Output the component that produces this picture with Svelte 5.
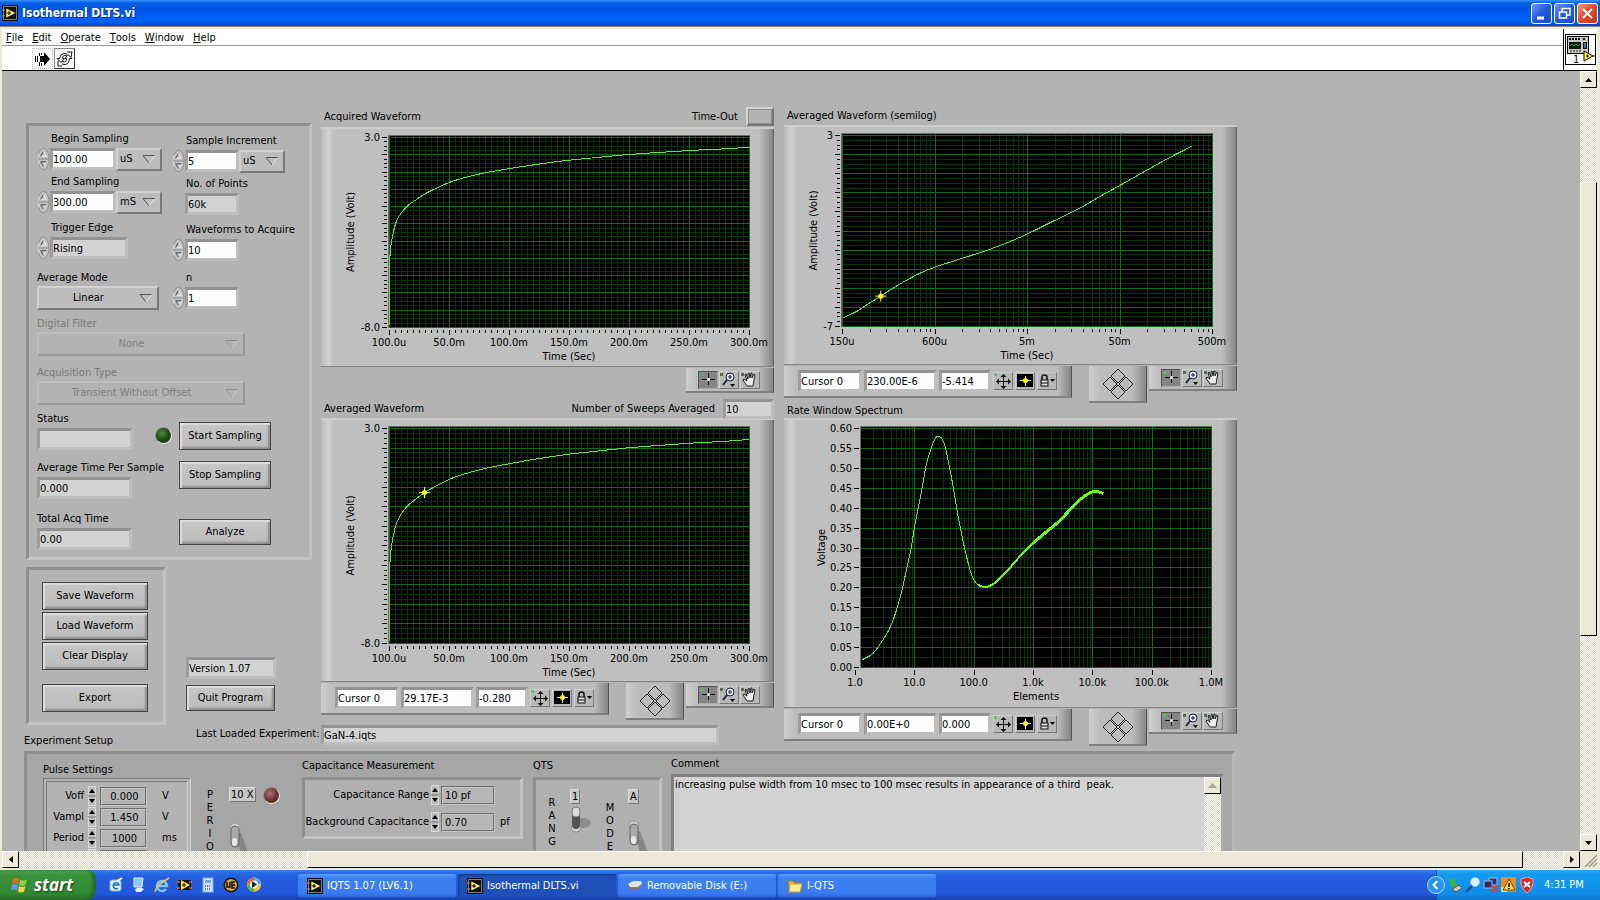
<script lang="ts">
  const menus = ["File", "Edit", "Operate", "Tools", "Window", "Help"];

  const transient = [
    [0, -7.86], [0.1, -4.08], [1.1, -3.31], [2.5, -2.69], [4.7, -2.06], [7.5, -1.61],
    [10.9, -1.27], [15, -0.96], [22, -0.61], [29.2, -0.28], [37.4, 0.01], [49.9, 0.4],
    [63.9, 0.7], [80.6, 0.97], [100, 1.2], [122.4, 1.44], [147.5, 1.67], [172.6, 1.84],
    [200.5, 2.02], [228.3, 2.15], [256, 2.27], [278.5, 2.34], [300, 2.44],
  ].map(([ms, v]) => [ms / 50, v]);

  const semilog = [
    [0, -6.56], [0.165, -6.18], [0.266, -5.85], [0.414, -5.41], [0.518, -5.08], [0.698, -4.56],
    [0.86, -4.16], [1.007, -3.88], [1.302, -3.42], [1.597, -2.95], [1.813, -2.55], [2, -2.15],
    [2.302, -1.43], [2.568, -0.8], [2.784, -0.19], [3.004, 0.4], [3.288, 1.18], [3.504, 1.76],
    [3.777, 2.44],
  ];

  const spectrum = [
    [0.118, 0.02], [0.292, 0.035], [0.483, 0.074], [0.617, 0.112], [0.763, 0.182], [0.853, 0.241],
    [0.943, 0.304], [1, 0.358], [1.1, 0.433], [1.2, 0.513], [1.302, 0.562], [1.347, 0.576],
    [1.403, 0.581], [1.448, 0.577], [1.51, 0.555], [1.582, 0.505], [1.655, 0.446], [1.734, 0.375],
    [1.846, 0.295], [1.93, 0.245], [2.003, 0.218], [2.07, 0.207], [2.166, 0.202], [2.267, 0.205],
    [2.379, 0.216], [2.548, 0.241], [2.772, 0.279], [2.997, 0.313], [3.221, 0.341], [3.446, 0.369],
    [3.614, 0.396], [3.782, 0.421], [3.923, 0.436], [4.018, 0.442], [4.091, 0.441], [4.175, 0.437],
  ];

  // x values are counted in major divisions, y values in axis units
  const timeAxis = ["100.0u", "50.0m", "100.0m", "150.0m", "200.0m", "250.0m", "300.0m"];
  const acquired = {
    name: "Acquired Waveform", h: 240, left: 68, right: 428, top: 10, bottom: 200, axis: 68,
    max: 3, min: -8, rows: 11, sub: 4, log: false, labels: timeAxis, ends: ["3.0", "-8.0"],
    xTitle: "Time (Sec)", yTitle: "Amplitude (Volt)", yTitleX: 30,
    lines: [{ points: transient, width: 1 }], cursor: null, fine: true,
  };
  const averaged = {
    ...acquired, name: "Averaged Waveform", h: 264, bottom: 225, cursor: [0.583, -0.28],
  };
  const averagedLog = {
    ...acquired, name: "Averaged Waveform (semilog)", left: 58, right: 428, bottom: 201, axis: 58,
    min: -7, rows: 10, log: true, labels: ["150u", "600u", "5m", "50m", "500m"], ends: ["3", "-7"],
    lines: [{ points: semilog, width: 1 }], cursor: [0.414, -5.41],
  };
  const rate = {
    ...acquired, name: "Rate Window Spectrum", h: 290, left: 77, right: 427, bottom: 249, axis: 71,
    max: 0.6, min: 0, rows: 12, sub: 2, log: true, fine: false,
    labels: ["1.0", "10.0", "100.0", "1.0k", "10.0k", "100.0k", "1.0M"],
    ends: Array.from({ length: 13 }, (_, i) => ((12 - i) / 20).toFixed(2)),
    xTitle: "Elements", yTitle: "Voltage", yTitleX: 38,
    lines: [
      { points: spectrum.slice(0, 22), width: 1 },
      { points: spectrum.slice(21, 28), width: 2 },
      { points: spectrum.slice(27), width: 3 },
    ],
    cursor: null,
  };

  let comment = $state(
    "increasing pulse width from 10 msec to 100 msec results in appearance of a third  peak."
  );

  type Graph = any;

  const sx = (g: Graph, d: number) => g.axis + (d * (g.right - g.axis)) / (g.labels.length - 1);
  const sy = (g: Graph, v: number) => g.top + ((g.max - v) / (g.max - g.min)) * (g.bottom - g.top);

  function xLines(g: Graph) {
    const out = [];
    for (let i = 0; i < g.labels.length; i++) {
      out.push({ x: Math.round(sx(g, i)) + 0.5, major: true });
      if (i === g.labels.length - 1) break;
      const steps = g.log ? [2, 3, 4, 5, 6, 7, 8, 9] : [1, 2, 3, 4, 5, 6, 7, 8, 9];
      for (const k of steps) {
        const d = g.log ? Math.log10(k) : k / 10;
        out.push({ x: Math.round(sx(g, i + d)) + 0.5, major: false });
      }
    }
    return out;
  }

  function yLines(g: Graph) {
    const n = g.rows * g.sub;
    return Array.from({ length: n + 1 }, (_, i) => ({
      y: Math.round(g.top + (i * (g.bottom - g.top)) / n) + 0.5,
      major: i % g.sub === 0,
    }));
  }

  // smooth curve through the samples, handles kept inside each x interval
  function path(g: Graph, pts: number[][]) {
    const p = pts.map(([d, v]) => [sx(g, d) + 0.5, sy(g, v) + 0.5]);
    const slope = p.map((_, i) => {
      const a = p[Math.max(i - 1, 0)];
      const b = p[Math.min(i + 1, p.length - 1)];
      return (b[1] - a[1]) / (b[0] - a[0]);
    });
    let d = `M${p[0][0]} ${p[0][1]}`;
    for (let i = 1; i < p.length; i++) {
      const [x0, y0] = p[i - 1];
      const [x1, y1] = p[i];
      const dx = (x1 - x0) / 3;
      d += dx < 1
        ? `L${x1} ${y1}`
        : `C${x0 + dx} ${y0 + slope[i - 1] * dx} ${x1 - dx} ${y1 - slope[i] * dx} ${x1} ${y1}`;
    }
    return d;
  }

  const pulse = [
    ["Voff", "0.000", "V"],
    ["Vampl", "1.450", "V"],
    ["Period", "1000", "ms"],
    ["Width", "", ""],
  ];

  const tasks = [
    { title: "IQTS 1.07 (LV6.1)", icon: "vi" },
    { title: "Isothermal DLTS.vi", icon: "vi", active: true },
    { title: "Removable Disk (E:)", icon: "disk" },
    { title: "I-QTS", icon: "folder" },
  ];
</script>

{#snippet viIcon()}
  <svg class="icon" width="16" height="16" viewBox="0 0 16 16">
    <rect width="16" height="16" fill="#111" />
    <rect x="1.5" y="1.5" width="13" height="13" fill="none" stroke="#e8e8d0" stroke-dasharray="1 1" />
    <path d="M4 3v10l10-5z" fill="#fff27a" stroke="#000" stroke-width="0.6" />
    <path d="M5 8h4M7 6v4" stroke="#000" />
    <path d="M0 5h3M0 11h3" stroke="#d8a030" />
  </svg>
{/snippet}

{#snippet spinner()}
  <svg class="spin" width="13" height="24" viewBox="0 0 14 24">
    <ellipse cx="7" cy="12" rx="6" ry="11.5" fill="#c2c2c2" stroke="#8a8a8a" />
    <path d="M2 6a5 10 0 0 0 0 12" fill="none" stroke="#e6e6e6" />
    <path d="M1 12h12" stroke="#888" />
    <path d="M4 9l3-5" stroke="#333" fill="none" />
    <path d="M7 4l3 5H5" stroke="#f4f4f4" fill="none" />
    <path d="M10 15l-3 5" stroke="#f4f4f4" fill="none" />
    <path d="M10 15H4l3 5" stroke="#444" fill="none" />
  </svg>
{/snippet}

{#snippet arrows()}
  <svg class="arrows" width="8" height="20" viewBox="0 0 8 20">
    <rect x="0.5" y="0.5" width="7" height="19" fill="#bcbcbc" stroke="#d8d8d8" />
    <path d="M0 10h8" stroke="#777" />
    <path d="M1 7h6L4 3zM1 13h6L4 17z" fill="#000" />
  </svg>
{/snippet}

{#snippet ring(id, options, cls, disabled = false)}
  <span class="ring {cls}">
    <select {id} {disabled} aria-label={id}>
      {#each options as o}<option>{o}</option>{/each}
    </select>
    <svg width="14" height="10" viewBox="0 0 14 10">
      <path d="M1 1.5h12" stroke={disabled ? "#8c8c8c" : "#555"} />
      <path d="M1 1.5L7 9" stroke={disabled ? "#999" : "#555"} fill="none" />
      <path d="M13 1.5L7 9" stroke={disabled ? "#ccc" : "#e8e8e8"} fill="none" />
    </svg>
  </span>
{/snippet}

{#snippet graph(g)}
  <svg class="plot" width="453" height={g.h} viewBox="0 0 453 {g.h}" role="img" aria-label={g.name}>
    <rect x={g.left} y={g.top - 1} width={g.right - g.left + 1} height={g.bottom - g.top + 2} fill="#000" />
    {#each [false, true] as major}
      {#each yLines(g).filter((l) => l.major === major) as l}
        <path d="M{g.left} {l.y}H{g.right + 1}" stroke={major ? "#0f6a1c" : "#08330c"} />
      {/each}
      {#each xLines(g).filter((l) => l.major === major && l.x > g.left) as l}
        <path d="M{l.x} {g.top - 1}V{g.bottom + 1}" stroke={major ? "#0f6a1c" : "#08330c"} />
      {/each}
    {/each}
    <path d="M{g.left - 0.5} {g.bottom + 1}V{g.top - 1.5}H{g.right + 1}" fill="none" stroke="#6d6d6d" />
    {#each yLines(g).filter((l) => g.fine || l.major) as l}
      <path d="M{g.left - (l.major ? 7 : 5)} {l.y}H{g.left - 2}" stroke="#000" />
    {/each}
    {#each xLines(g).filter((l) => g.fine || l.major) as l}
      <path d="M{l.x} {g.bottom + 3}V{g.bottom + (l.major ? 8 : 6)}" stroke="#000" />
    {/each}
    {#each g.ends as e, i}
      <text x={g.left - 9} y={g.top + 4 + (i * (g.bottom - g.top)) / (g.ends.length - 1)} text-anchor="end">{e}</text>
    {/each}
    {#each g.labels as l, i}
      <text x={sx(g, i)} y={g.bottom + 19} text-anchor="middle">{l}</text>
    {/each}
    <text x={(g.left + g.right) / 2} y={g.bottom + 33} text-anchor="middle">{g.xTitle}</text>
    <text transform="translate({g.yTitleX + 3} {(g.top + g.bottom) / 2}) rotate(-90)" text-anchor="middle">{g.yTitle}</text>
    {#each g.lines as l}
      <path
        d={path(g, l.points)}
        fill="none"
        stroke={l.width > 1 ? "#6cf71c" : "#68e038"}
        stroke-width={l.width}
        stroke-linejoin="round"
        shape-rendering="crispEdges"
      />
    {/each}
    {#if g.cursor}
      <g transform="translate({sx(g, g.cursor[0])} {sy(g, g.cursor[1])})">
        <path d="M-5 0.500H6M0.500-5V6" stroke="#ffff30" />
        <circle cx="0.500" cy="0.500" r="2.500" fill="#ffff30" />
      </g>
    {/if}
  </svg>
{/snippet}

{#snippet cursorLegend(id, values)}
  <div class="bar legend">
    {#each values as v, i}
      <input class="sunk white c{i}" aria-label="{id} cursor field {i + 1}" value={v} />
    {/each}
    <button class="tool" aria-label="Move cursor">
      <svg width="20" height="18" viewBox="0 0 20 18">
        <rect x="1" y="1" width="3" height="3" fill="#5ec45e" />
        <path d="M10.500 3v12M4 9.500h12" stroke="#000" />
        <path d="M10.500 2l3 3h-6zM10.500 17l3-3h-6zM3 9.500l3-3v6zM18 9.500l-3-3v6z" fill="#111" />
      </svg>
    </button>
    <button class="tool" aria-label="Cursor style">
      <svg width="20" height="18" viewBox="0 0 20 18">
        <rect x="2" y="2" width="16" height="13" fill="#000" />
        <path d="M5 8.500h11M10.500 4v10" stroke="#ff3" />
        <circle cx="10.500" cy="8.500" r="2.500" fill="#ff3" />
      </svg>
    </button>
    <button class="tool" aria-label="Lock cursor">
      <svg width="20" height="18" viewBox="0 0 20 18">
        <path d="M5 8V5q0-2 2.500-2T10 5v3" fill="none" stroke="#111" stroke-width="1.500" />
        <rect x="4" y="8" width="7" height="6" fill="#ddd" stroke="#111" />
        <path d="M4 11h7" stroke="#111" />
        <path d="M13 7h5l-2.500 3z" fill="#000" />
      </svg>
    </button>
  </div>
  <div class="bar pad">
    <svg width="32" height="32" viewBox="0 0 32 32" fill="none" stroke="#222">
      <path d="M16 1l7 7-7 7-7-7zM16 17l7 7-7 7-7-7zM8 9l7 7-7 7-7-7zM24 9l7 7-7 7-7-7z" />
    </svg>
  </div>
{/snippet}

{#snippet palette()}
  <div class="bar palette">
    <button class="tool on" aria-label="Crosshair">
      <svg width="20" height="17" viewBox="0 0 20 17">
        <rect x="2" y="2" width="4" height="3" fill="#5fb35f" />
        <path d="M10.500 2v12M4 8.500h13" stroke="#111" />
        <circle cx="10.500" cy="8.500" r="1.500" fill="#eee" />
      </svg>
    </button>
    <button class="tool" aria-label="Zoom">
      <svg width="20" height="17" viewBox="0 0 20 17">
        <rect x="1" y="2" width="3" height="3" fill="#5a6b50" />
        <circle cx="11" cy="6" r="4" fill="#e6e6f4" stroke="#223" />
        <path d="M9 6h4M11 4v4" stroke="#224" />
        <path d="M8 9l-4 5" stroke="#223" stroke-width="2" />
        <path d="M11 13h5l-2.500 3z" fill="#000" />
      </svg>
    </button>
    <button class="tool" aria-label="Pan">
      <svg width="20" height="17" viewBox="0 0 20 17">
        <rect x="1" y="2" width="3" height="3" fill="#5a6b50" />
        <path d="M7 15l-4-6 1-1 3 2-2-6 1-1 2 5V3l1-1 1 5 1-5 1 0 0 5 2-4 1 1-1 5-1 6z" fill="#eee" stroke="#222" />
      </svg>
    </button>
  </div>
{/snippet}

{#snippet toggle(up)}
  <svg class="toggle" width="22" height="34" viewBox="0 0 22 34">
    {#if up}
      <ellipse cx="13" cy="17" rx="8" ry="5" fill="#8d8d8d" />
      <ellipse cx="6" cy="22" rx="5" ry="4" fill="#d0d0d0" stroke="#888" />
      <rect x="2" y="3" width="8" height="20" rx="4" fill="#555" />
      <rect x="2" y="1" width="8" height="10" rx="4" fill="#ddd" stroke="#777" />
    {:else}
      <path d="M7 12l5 0 8 22h-8z" fill="#868686" />
      <ellipse cx="6" cy="7" rx="5" ry="5" fill="#cfcfcf" stroke="#999" />
      <rect x="2" y="5" width="8" height="21" rx="4" fill="#aaa" stroke="#666" />
      <rect x="3" y="17" width="5" height="8" rx="3" fill="#e8e8e8" />
    {/if}
  </svg>
{/snippet}

<div class="desktop">
  <header class="title">
    {@render viIcon()}
    <h1>Isothermal DLTS.vi</h1>
    <button class="win" aria-label="Minimize"><svg width="19" height="19"><path d="M5 14h7" stroke="#fff" stroke-width="3" /></svg></button>
    <button class="win" aria-label="Restore">
      <svg width="19" height="19" fill="none" stroke="#fff"><path d="M7 7V4.500h8V11h-3" stroke-width="1.500" /><path d="M4.500 8h7v6h-7z" stroke-width="1.500" /></svg>
    </button>
    <button class="win close" aria-label="Close"><svg width="19" height="19"><path d="M5 5l9 9M14 5l-9 9" stroke="#fff" stroke-width="2" /></svg></button>
  </header>

  <div class="window">
    <div class="head">
      <div class="bars">
        <nav>
          {#each menus as m}
            <button><u>{m[0]}</u>{m.slice(1)}</button>
          {/each}
        </nav>
        <div class="toolbar">
          <button class="run" aria-label="Run">
            <svg width="19" height="20" viewBox="0 0 19 20">
              <path d="M7 7h4V3l6 7-6 7v-4H7z" fill="#000" />
              <path d="M2.500 7v6M4.500 7v6M6.500 4v3M6.500 13v4M8.500 4v2M8.500 14v3" stroke="#000" />
            </svg>
          </button>
          <button class="run cont" aria-label="Run continuously">
            <svg width="19" height="20" viewBox="0 0 19 20" fill="none" stroke="#111">
              <path d="M2 9.500h2.500Q5 5 9 4.500l3 .500M7.500 9.500Q7 7 9.500 6.500L12 7M2 9.500l4 4 3.500-4H7.500" />
              <path d="M17 9.500h-2.500Q14 15 10 15.500l-3-.500M11.500 9.500Q12 12.500 9.500 13L7 12.500M17 9.500l-4-4-3 4h1.500" />
              <path d="M12 3l5 0-1 5M7 17l-4 0 0-5" />
            </svg>
          </button>
        </div>
      </div>
      <div class="connector">
        <svg width="31" height="31" viewBox="0 0 31 31">
          <rect x="0.500" y="0.500" width="30" height="30" fill="#fff" stroke="#000" />
          <rect x="2.500" y="2.500" width="21" height="17" fill="#c8c8c8" stroke="#000" />
          <path d="M4 5h12M18 5h3" stroke="#111" stroke-width="2" stroke-dasharray="2 1" />
          <rect x="4" y="8" width="12" height="7" fill="#061a06" />
          <path d="M5 12l2-2 2 2 2-2 2 2 2-2" stroke="#3ba24a" fill="none" />
          <rect x="18.500" y="8.500" width="3" height="6" fill="#37a" stroke="#000" />
          <path d="M5 17h11" stroke="#222" stroke-dasharray="2 1" />
          <path d="M19 17v10l9-5z" fill="#ff3" stroke="#000" />
          <path d="M21 22h3M22.500 20.500v3M28 22h3" stroke="#000" />
          <text x="8" y="29">1</text>
        </svg>
      </div>
    </div>

    <div class="body">
      <main>
        <div class="upper">
          <div class="west">
            <div class="pair">
              <div class="left">
                <section class="group setup">
                  <div class="field ind">
                    <label for="begin">Begin Sampling</label>
                    <div>{@render spinner()}<input id="begin" class="sunk white w64" value="100.00" />{@render ring("beginUnit", ["uS"], "unit")}</div>
                  </div>
                  <div class="field ind low">
                    <label for="inc">Sample Increment</label>
                    <div>{@render spinner()}<input id="inc" class="sunk white w54" value="5" />{@render ring("incUnit", ["uS"], "unit")}</div>
                  </div>
                  <div class="field ind">
                    <label for="end">End Sampling</label>
                    <div>{@render spinner()}<input id="end" class="sunk white w64" value="300.00" />{@render ring("endUnit", ["mS"], "unit")}</div>
                  </div>
                  <div class="field ind low">
                    <label for="points">No. of Points</label>
                    <div class="inset"><input id="points" class="sunk w54" value="60k" readonly /></div>
                  </div>
                  <div class="field ind">
                    <label for="edge">Trigger Edge</label>
                    <div>{@render spinner()}<input id="edge" class="sunk w78" value="Rising" /></div>
                  </div>
                  <div class="field ind low">
                    <label for="count">Waveforms to Acquire</label>
                    <div>{@render spinner()}<input id="count" class="sunk white w54" value="10" /></div>
                  </div>
                  <div class="field">
                    <label for="mode">Average Mode</label>
                    <div>{@render ring("mode", ["Linear"], "mid")}</div>
                  </div>
                  <div class="field ind">
                    <label for="n">n</label>
                    <div>{@render spinner()}<input id="n" class="sunk white w54" value="1" /></div>
                  </div>
                  <div class="field span off">
                    <label for="filter">Digital Filter</label>
                    <div>{@render ring("filter", ["None"], "wide", true)}</div>
                  </div>
                  <div class="field span off">
                    <label for="acq">Acquisition Type</label>
                    <div>{@render ring("acq", ["Transient Without Offset"], "wide", true)}</div>
                  </div>
                  <div class="field">
                    <label for="status">Status</label>
                    <div class="lit"><input id="status" class="sunk w98" value="" readonly /><i class="led green"></i></div>
                  </div>
                  <div class="act"><button class="btn">Start Sampling</button></div>
                  <div class="field">
                    <label for="avgTime">Average Time Per Sample</label>
                    <div><input id="avgTime" class="sunk w95" value="0.000" readonly /></div>
                  </div>
                  <div class="act stop"><button class="btn">Stop Sampling</button></div>
                  <div class="field">
                    <label for="total">Total Acq Time</label>
                    <div><input id="total" class="sunk w95" value="0.00" readonly /></div>
                  </div>
                  <div class="act analyze"><button class="btn">Analyze</button></div>
                </section>

                <div class="files">
                  <section class="group">
                    <button class="btn">Save Waveform</button>
                    <button class="btn">Load Waveform</button>
                    <button class="btn">Clear Display</button>
                    <button class="btn last">Export</button>
                  </section>
                  <div class="quit">
                    <input class="sunk" aria-label="Version" value="Version 1.07" readonly />
                    <button class="btn">Quit Program</button>
                  </div>
                </div>
              </div>

              <div class="graphs">
                <div class="caption h22">
                  <h2>Acquired Waveform</h2>
                  <span class="push">Time-Out</span>
                  <i class="flat"></i>
                </div>
                {@render graph(acquired)}
                <div class="under h31">{@render palette()}</div>
                <div class="caption h20">
                  <h2>Averaged Waveform</h2>
                  <label class="push" for="sweeps">Number of Sweeps Averaged</label>
                  <input id="sweeps" class="sunk w51" value="10" readonly />
                </div>
                {@render graph(averaged)}
                <div class="under">
                  {@render cursorLegend("Averaged", ["Cursor 0", "29.17E-3", "-0.280"])}
                  {@render palette()}
                </div>
              </div>
            </div>
            <div class="loaded">
              <h2>Experiment Setup</h2>
              <label for="last">Last Loaded Experiment:</label>
              <input id="last" class="sunk" value="GaN-4.iqts" readonly />
            </div>
          </div>

          <div class="graphs">
            <div class="caption h20"><h2>Averaged Waveform (semilog)</h2></div>
            {@render graph(averagedLog)}
            <div class="under h37">
              {@render cursorLegend("Semilog", ["Cursor 0", "230.00E-6", "-5.414"])}
              {@render palette()}
            </div>
            <div class="caption h16"><h2>Rate Window Spectrum</h2></div>
            {@render graph(rate)}
            <div class="under">
              {@render cursorLegend("Spectrum", ["Cursor 0", "0.00E+0", "0.000"])}
              {@render palette()}
            </div>
          </div>
        </div>

        <section class="group experiment">
          <div class="block pulse">
            <h3>Pulse Settings</h3>
            <div class="double">
              {#each pulse as [name, value, unit]}
                <label for={name}>{value ? name : ""}</label>
                {@render arrows()}
                <input id={name} class="thin" {value} aria-label={name} />
                <span>{unit}</span>
              {/each}
            </div>
          </div>
          <div class="period">
            <div class="letters">{#each "PERIO" as c}<span>{c}</span>{/each}</div>
            <div class="sw">
              <div><b>10 X</b><i class="led red"></i></div>
              {@render toggle(false)}
            </div>
          </div>
          <div class="block cap">
            <h3>Capacitance Measurement</h3>
            <div class="group">
              <label for="range">Capacitance Range</label>
              {@render arrows()}
              <input id="range" class="thin" value="10 pf" />
              <span></span>
              <label for="back">Background Capacitance</label>
              {@render arrows()}
              <input id="back" class="thin" value="0.70" />
              <span>pf</span>
            </div>
          </div>
          <div class="block qts">
            <h3>QTS</h3>
            <div class="group">
              <div class="letters first">{#each "RANG" as c}<span>{c}</span>{/each}</div>
              <div class="sw"><b>1</b>{@render toggle(true)}</div>
              <div class="letters">{#each "MODE" as c}<span>{c}</span>{/each}</div>
              <div class="sw second"><b>A</b>{@render toggle(false)}</div>
            </div>
          </div>
          <div class="block comment">
            <label for="comment">Comment</label>
            <div class="memo">
              <textarea id="comment" bind:value={comment}></textarea>
              <div class="track"><button class="sb off" aria-label="Scroll comment up"><svg width="9" height="5"><path d="M0 5h9L4.500 0z" fill="#a8a595" /></svg></button></div>
            </div>
          </div>
        </section>
      </main>
      <div class="track v">
        <button class="sb" aria-label="Scroll up"><svg width="7" height="4"><path d="M0 4h7L3.500 0z" /></svg></button>
        <div class="gap"></div>
        <div class="thumb"></div>
        <div class="rest"></div>
        <button class="sb" aria-label="Scroll down"><svg width="7" height="4"><path d="M0 0h7L3.500 4z" /></svg></button>
      </div>
    </div>
    <div class="foot">
      <div class="track h">
        <button class="sb" aria-label="Scroll left"><svg width="4" height="7"><path d="M4 0v7L0 3.500z" /></svg></button>
        <div class="gap"></div>
        <div class="thumb"></div>
        <div class="rest"></div>
        <button class="sb" aria-label="Scroll right"><svg width="4" height="7"><path d="M0 0v7l4-3.500z" /></svg></button>
      </div>
      <svg class="grip" width="16" height="16"><path d="M4 16L16 4M8 16l8-8M12 16l4-4" stroke="#9c9984" stroke-width="1.500" /></svg>
    </div>
  </div>

  <footer>
    <button class="start">
      <svg width="18" height="18" viewBox="0 0 18 18">
        <path d="M2 3q3-2 6 0L7 8Q4 6 1 8z" fill="#f0642c" />
        <path d="M9 3.500q3 2 7 0L14.500 9q-3 2-6.500 0z" fill="#8cd04a" />
        <path d="M1 9q3-2 6 0l-1 5.500q-3-2-6 0z" fill="#5b9cf5" />
        <path d="M8 10q3 2 6.500 0L13 15.500q-3 2-6 0z" fill="#fbd23c" />
      </svg>
      start
    </button>
    <div class="quick">
      <svg width="16" height="16"><rect x="2" y="3" width="11" height="11" rx="2" fill="#e8f3ff" stroke="#79b4ee" /><path d="M5 8h6a3 3 0 1 0-1 3" fill="none" stroke="#1870c8" stroke-width="1.500" /><path d="M9 4l5-3" stroke="#fff" stroke-width="2" /></svg>
      <svg width="16" height="16"><path d="M3 1h9l-1 9H3z" fill="#8fc4fa" stroke="#dcefff" /><path d="M4 12q5-3 9 0l-3 3H5z" fill="#e6eefa" /></svg>
      <svg width="16" height="16"><path d="M4 9h9a5 5 0 1 0-1 3" fill="none" stroke="#7cc8ff" stroke-width="2.500" /><path d="M1 15Q2 8 15 1" fill="none" stroke="#f5c84a" stroke-width="1.500" /></svg>
      <svg width="16" height="16"><rect x="1" y="3" width="13" height="10" fill="#111" /><path d="M4 3v10l9-5z" fill="#ffe93c" /><path d="M0 5h3M0 11h3M12 5h3M12 11h3" stroke="#e86a20" stroke-width="1.500" /><path d="M5 8h4M7 6v4" stroke="#000" /></svg>
      <svg width="16" height="16"><rect x="3" y="1" width="10" height="14" fill="#cfe2fb" stroke="#88aee8" /><rect x="5" y="3" width="6" height="3" fill="#7aa7dd" /><path d="M5 9h6M5 12h6" stroke="#5c80c0" stroke-width="2" stroke-dasharray="1 1" /></svg>
      <svg width="16" height="16"><circle cx="8" cy="8" r="7.500" fill="#1a1408" /><circle cx="8" cy="8" r="6" fill="#c9a24a" /><path d="M4 5v5h3V5M12 5H9v6h3M9 8h3" fill="none" stroke="#1a1408" stroke-width="1.500" /></svg>
      <svg width="16" height="16"><circle cx="8" cy="7.500" r="7" fill="#f3f3f3" /><path d="M1 7.500a7 7 0 0 1 7-7v3a4 4 0 0 0-4 4z" fill="#e8622c" /><path d="M8 .500a7 7 0 0 1 7 7h-3a4 4 0 0 0-4-4z" fill="#57a8ee" /><path d="M15 7.500a7 7 0 0 1-7 7v-3a4 4 0 0 0 4-4z" fill="#f5b92c" /><path d="M8 14.500a7 7 0 0 1-7-7h3a4 4 0 0 0 4 4z" fill="#5cb83c" /><path d="M6 4v7l5-3.500z" fill="#223" /></svg>
    </div>
    <div class="tasks">
      {#each tasks as t}
        <button class:active={t.active}>
          {#if t.icon === "vi"}
            {@render viIcon()}
          {:else if t.icon === "disk"}
            <svg class="icon" width="16" height="16"><path d="M1 6l5-3h8l1 3-4 3H3z" fill="#e4e4e4" /><path d="M1 6l2 3h8l4-3v2l-4 4H4L1 8z" fill="#8a7468" /></svg>
          {:else}
            <svg class="icon" width="16" height="16"><path d="M1 3h5l2 2h6v8H2z" fill="#e8b83c" stroke="#a87818" /><path d="M3 6h12l-2 8H2z" fill="#ffec9a" stroke="#c89a30" /></svg>
          {/if}
          <span>{t.title}</span>
        </button>
      {/each}
    </div>
    <div class="tray">
      <svg class="chev" width="18" height="18"><circle cx="9" cy="9" r="8.500" fill="#2b93f0" stroke="#a9d8ff" /><path d="M10.500 5l-4 4 4 4" fill="none" stroke="#fff" stroke-width="2" /></svg>
      <svg width="16" height="16"><path d="M2 2l6-1 1 6 3 0-4 5-5-4 2-1z" fill="#3cb43c" /><path d="M5 12l7-4 3 3-6 4z" fill="#c8c8c0" stroke="#555" /></svg>
      <svg width="16" height="16"><circle cx="10" cy="5" r="4.500" fill="#dff1ff" stroke="#8fc8f8" /><path d="M7 9l-6 6" stroke="#2a3c80" stroke-width="2" /></svg>
      <svg width="16" height="16"><rect x="6" y="1" width="8" height="7" fill="#1c3a8c" stroke="#aab8dc" /><rect x="1" y="4" width="8" height="7" fill="#20306c" stroke="#aab8dc" /><path d="M8 8l7 7M15 8l-7 7" stroke="#e8382c" stroke-width="2" /></svg>
      <svg width="16" height="16"><rect width="15" height="15" fill="#e88a28" /><path d="M0 10h6v5H0z" fill="#c8e0a0" /><path d="M8 2l6 11H2z" fill="#ffd940" stroke="#7a4a08" /><path d="M8 6v4M8 11v1" stroke="#000" stroke-width="1.500" /></svg>
      <svg width="16" height="16"><path d="M8 0l6 2q1 9-6 14Q1 11 2 2z" fill="#d42a2a" stroke="#e8b0b0" /><path d="M5 5l6 5M11 5l-6 5" stroke="#fff" stroke-width="2" /></svg>
      <time>4:31 PM</time>
    </div>
  </footer>
</div>

<style>
  :global(body) {
    background: #b3b3b3;
  }

  .desktop {
    display: flex;
    flex-direction: column;
    height: 100vh;
    overflow: hidden;
    font-family: "DejaVu Sans Condensed", "DejaVu Sans", sans-serif;
    font-size: 11px;
    line-height: 16px;
    color: #000;
  }

  .desktop :global(*) {
    box-sizing: border-box;
  }

  button,
  input,
  select,
  textarea {
    margin: 0;
    font: inherit;
    color: inherit;
  }

  button {
    display: flex;
    align-items: center;
    justify-content: center;
    padding: 0;
    border: 0;
    background: none;
    white-space: nowrap;
  }

  svg {
    display: block;
    flex: none;
  }

  h1,
  h2,
  h3 {
    margin: 0;
    font-size: 11px;
    font-weight: normal;
    white-space: nowrap;
  }

  label {
    white-space: nowrap;
  }

  /* title bar */
  .title {
    display: flex;
    align-items: center;
    gap: 2px;
    height: 26px;
    flex: none;
    padding: 0 2px;
    background: linear-gradient(#3a92ff, #0a5fe8 3px, #0055e4 9px, #0064ff 20px, #0053dd 24px, #003cc0);
  }

  .title h1 {
    flex: 1;
    padding-left: 2px;
    font-size: 12px;
    font-weight: bold;
    color: #fff;
    text-shadow: 1px 1px #0a2a80;
  }

  .win {
    width: 21px;
    height: 21px;
    border: 1px solid #fff;
    border-radius: 3px;
    background: linear-gradient(135deg, #6d9bf5, #2458dc 50%, #1c4cd0);
  }

  .win.close {
    background: linear-gradient(135deg, #f09a80, #dc4a24 50%, #c43c18);
  }

  .window {
    display: flex;
    flex: 1;
    flex-direction: column;
    min-height: 0;
    padding: 2px 3px 2px 2px;
    background: #ece9d8;
    border-top: 1px solid #8c8a80;
  }

  .head {
    display: flex;
    flex: none;
    height: 42px;
    background: #fff;
    border-bottom: 1px solid #000;
  }

  .bars {
    flex: 1;
  }

  nav {
    display: flex;
    height: 17px;
    border-bottom: 1px solid #999;
  }

  nav button {
    padding: 1px 5px 0 4px;
  }

  .toolbar {
    display: flex;
    gap: 1px;
    padding: 2px 0 0 30px;
  }

  .run {
    width: 21px;
    height: 21px;
    border: 1px dotted #bbb;
  }

  .run.cont {
    border: 1px solid #888;
    border-right-color: #333;
    border-bottom-color: #333;
  }

  .connector {
    display: flex;
    align-items: center;
    justify-content: center;
    width: 34px;
    border-left: 1px solid #000;
  }

  /* front panel */
  .body {
    display: flex;
    flex: 1;
    min-height: 0;
  }

  main {
    flex: 1;
    min-width: 0;
    overflow: hidden;
    padding: 34px 0 0 22px;
    background: #b3b3b3;
  }

  .upper {
    display: flex;
    gap: 10px;
  }

  .west {
    width: 750px;
  }

  .pair {
    display: flex;
    justify-content: space-between;
  }

  .left {
    display: flex;
    flex-direction: column;
    gap: 7px;
    width: 288px;
    padding: 18px 0 0 2px;
  }

  .group {
    border: 3px solid;
    border-color: #8f8f8f #c2c2c2 #c2c2c2 #8f8f8f;
  }

  .setup {
    display: grid;
    grid-template-columns: 135px 1fr;
    grid-template-rows: 43px 46px 50px 46px 49px 46px 49px 51px 46px;
    padding: 5px 0 0 8px;
  }

  .field {
    display: flex;
    flex-direction: column;
  }

  .field > div {
    display: flex;
    align-items: center;
    height: 24px;
  }

  .ind > label {
    padding-left: 14px;
  }

  .low {
    padding-top: 2px;
  }

  .inset {
    padding-left: 13px;
  }

  .span {
    grid-column: 1 / 3;
  }

  .off label {
    color: #7a7a7a;
  }

  .sunk {
    height: 22px;
    min-width: 0;
    padding: 0;
    border: 3px solid;
    border-color: #929292 #bebebe #bebebe #9c9c9c;
    border-radius: 0;
    background: #d2d2d2;
    outline: none;
  }

  .white {
    background: #fdfdfd;
  }

  .w51 { width: 51px; }
  .w54 { width: 54px; }
  .w64 { width: 66px; }
  .w78 { width: 78px; }
  .w95 { width: 95px; }
  .w98 { width: 98px; }

  .ring {
    display: grid;
    flex: none;
    align-items: center;
  }

  .ring > * {
    grid-area: 1 / 1;
  }

  .ring svg {
    justify-self: end;
    margin-right: 6px;
    pointer-events: none;
  }

  select {
    width: 100%;
    height: 24px;
    padding: 0 24px 0 5px;
    appearance: none;
    border: 2px solid;
    border-color: #d2d2d2 #787878 #787878 #d0d0d0;
    border-radius: 0;
    background: #bdbdbd;
    opacity: 1;
  }

  select:disabled {
    border-color: #bebebe #999 #999 #bebebe;
    background: #b3b3b3;
    color: #7d7d7d;
    opacity: 1;
  }

  .unit { width: 46px; }
  .mid { width: 122px; }
  .wide { width: 208px; }

  .unit select {
    height: 23px;
    padding: 0 0 0 2px;
  }

  .mid select,
  .wide select {
    text-align-last: center;
  }

  .led {
    flex: none;
    width: 17px;
    height: 17px;
    border: 1px solid #8c8c8c;
    border-right-color: #e8e8e8;
    border-bottom-color: #e8e8e8;
    border-radius: 50%;
  }

  .lit .led {
    align-self: flex-start;
  }

  .green {
    margin-left: 22px;
    background: radial-gradient(circle at 40% 35%, #4d8a38, #1f4a14 50%, #0c2a06);
  }

  .red {
    background: radial-gradient(circle at 40% 35%, #b07070, #703434 50%, #401818);
  }

  .act {
    padding: 11px 0 0 7px;
  }

  .act.stop {
    padding-top: 1px;
  }

  .act.analyze {
    padding-top: 8px;
  }

  .btn {
    width: 92px;
    height: 28px;
    border: 1px solid #444;
    background: linear-gradient(#c6c6c6, #bcbcbc);
    box-shadow: inset 2px 2px 1px #dcdcdc, inset -2px -2px 2px #8e8e8e;
  }

  .analyze .btn {
    height: 26px;
  }

  .files {
    display: flex;
    gap: 20px;
  }

  .files .group {
    display: flex;
    flex-direction: column;
    gap: 2px;
    width: 140px;
    height: 158px;
    padding: 12px 0 0 13px;
  }

  .files .group .btn {
    width: 106px;
  }

  .files .last {
    margin-top: 12px;
  }

  .quit {
    display: flex;
    flex-direction: column;
    justify-content: flex-end;
    gap: 6px;
    width: 90px;
    padding-bottom: 14px;
  }

  .quit .btn {
    width: 89px;
    height: 26px;
  }

  /* graphs */
  .graphs {
    flex: none;
    width: 453px;
  }

  .caption {
    display: flex;
    align-items: center;
    gap: 8px;
    padding: 2px 0 0 3px;
  }

  .push {
    margin-left: auto;
  }

  .h16 { height: 16px; }
  .h20 { height: 20px; }
  .h22 { height: 22px; }

  .caption .sunk {
    height: 20px;
  }

  .flat {
    width: 28px;
    height: 19px;
    margin-bottom: 2px;
    border: 2px solid;
    border-color: #d4d4d4 #777 #777 #d4d4d4;
    outline: 1px solid #8d8d8d;
    outline-offset: -3px;
  }

  .plot {
    background: linear-gradient(90deg, #b9b9b9, #d2d2d2 7px, #bfbfbf 13px, #bfbfbf 438px, #a6a6a6 444px, #8c8c8c 451px, #5c5c5c);
    box-shadow: inset 0 2px #cdcdcd, inset 0 -1px #858585;
  }

  text {
    font-size: 11px;
  }

  .under {
    display: flex;
    align-items: flex-start;
    height: 38px;
    padding-top: 1px;
  }

  .under.h31 { height: 31px; }
  .under.h37 { height: 37px; }

  .bar {
    display: flex;
    align-items: center;
    background: linear-gradient(90deg, #cfcfcf, #bcbcbc 12px, #bcbcbc calc(100% - 14px), #858585);
    border-right: 1px solid #555;
    border-bottom: 2px solid #808080;
  }

  .legend {
    width: 288px;
    height: 32px;
    padding-left: 14px;
    gap: 2px;
  }

  .c0 { width: 64px; }
  .c1 { width: 73px; }
  .c2 { width: 52px; }

  .pad {
    justify-content: center;
    width: 58px;
    height: 37px;
    margin-left: 17px;
  }

  .palette {
    width: 88px;
    height: 25px;
    margin-left: auto;
    padding-left: 12px;
    gap: 1px;
  }

  .tool {
    width: 20px;
    height: 18px;
    border: 1px solid;
    border-color: #d0d0d0 #777 #777 #d0d0d0;
    background: #b8b8b8;
    overflow: hidden;
  }

  .tool.on {
    border-color: #555 #aaa #aaa #555;
    background: #858585;
  }

  .loaded {
    display: flex;
    height: 26px;
  }

  .loaded h2 {
    width: 172px;
    padding-top: 8px;
  }

  .loaded label {
    width: 125px;
    padding-top: 1px;
  }

  .loaded .sunk {
    width: 398px;
    height: 20px;
  }

  /* experiment setup */
  .experiment {
    display: flex;
    align-items: flex-start;
    width: 1211px;
    height: 320px;
    padding-left: 16px;
    background: #a6a6a6;
    border-right-color: #b8b8b8;
  }

  .experiment .group {
    background: #b0b0b0;
  }

  .block {
    padding-top: 4px;
  }

  .pulse {
    width: 148px;
    padding-top: 8px;
  }

  .double {
    display: grid;
    grid-template-columns: 36px 8px 47px 1fr;
    gap: 1px 4px;
    height: 150px;
    padding: 4px 0 0 1px;
    border: 4px double #7c7c7c;
    border-right-color: #d2d2d2;
    background: #b3b3b3;
    align-content: start;
    align-items: center;
  }

  .double label,
  .cap label {
    text-align: right;
  }

  .double span {
    padding-left: 11px;
  }

  .thin {
    width: 100%;
    height: 19px;
    padding: 0 0 0 2px;
    border: 2px groove #c4c4c4;
    border-radius: 0;
    background: #b6b6b6;
  }

  .double .thin {
    text-align: center;
  }

  .period {
    display: flex;
    gap: 14px;
    width: 91px;
    padding: 33px 0 0 14px;
  }

  .letters {
    display: flex;
    flex-direction: column;
    align-items: center;
    width: 10px;
    padding-top: 1px;
    line-height: 13px;
  }

  .sw {
    display: flex;
    flex-direction: column;
    gap: 17px;
  }

  .sw div {
    display: flex;
    gap: 7px;
  }

  .sw b {
    padding: 0 1px;
    border: 1px solid;
    border-color: #ddd #777 #777 #ddd;
    background: #c6c6c6;
    font-weight: normal;
    line-height: 13px;
    white-space: nowrap;
    align-self: flex-start;
  }

  .cap {
    width: 221px;
    margin-left: 20px;
  }

  .cap .group {
    display: grid;
    grid-template-columns: 124px 8px 54px 1fr;
    gap: 7px 2px;
    height: 62px;
    margin-top: 3px;
    padding: 5px 0 0 0;
    align-content: start;
    align-items: center;
  }

  .cap span {
    padding-left: 3px;
  }

  .qts {
    width: 129px;
    margin-left: 10px;
  }

  .qts .group {
    display: flex;
    height: 150px;
    margin-top: 3px;
    padding: 9px 0 0 11px;
    gap: 13px;
  }

  .qts .letters {
    padding-top: 12px;
  }

  .qts .letters.first {
    padding-top: 7px;
  }

  .qts .sw {
    gap: 2px;
    width: 22px;
  }

  .qts .sw.second {
    gap: 15px;
  }

  .comment {
    width: 553px;
    margin-left: 9px;
    padding-top: 2px;
  }

  .comment label {
    display: block;
  }

  .memo {
    display: flex;
    height: 150px;
    margin-top: 2px;
    border: 3px solid;
    border-color: #828282 #aaa #aaa #828282;
    background: #d2d2d2;
  }

  textarea {
    flex: 1;
    padding: 0 0 0 1px;
    border: 0;
    background: transparent;
    resize: none;
    overflow: hidden;
    outline: none;
  }

  /* scroll bars */
  .track {
    display: flex;
    flex: none;
    background: repeating-conic-gradient(#fff 0 25%, #dcd6c6 0 50%) 0 0 / 2px 2px;
  }

  .track.v,
  .memo .track {
    flex-direction: column;
    width: 17px;
  }

  .track.h {
    flex: 1;
  }

  .sb,
  .thumb {
    background: #ece9d8;
    border: 1px solid;
    border-color: #fff #000 #000 #fff;
  }

  .sb {
    flex: none;
    width: 17px;
    height: 17px;
  }

  .v .gap { flex: 94; }
  .v .thumb { flex: 453; }
  .v .rest { flex: 199; }
  .h .gap { flex: 289; }
  .h .thumb { flex: 1218; }
  .h .rest { flex: 40; }

  .foot {
    display: flex;
    flex: none;
    height: 17px;
  }

  .grip {
    margin-left: 1px;
  }

  /* taskbar */
  footer {
    display: flex;
    flex: none;
    height: 30px;
    background: linear-gradient(#3a80ee, #2a6ae4 3px, #245cdc 8px, #2158da 24px, #1941a5);
    color: #fff;
  }

  .start {
    gap: 5px;
    width: 96px;
    padding-right: 12px;
    border-radius: 0 8px 10px 0;
    background: linear-gradient(#5cae5c, #3c923c 5px, #338a33 22px, #2a742a);
    box-shadow: inset -3px 0 4px #1f6424;
    font-family: "Open Sans", sans-serif;
    font-size: 17px;
    font-style: italic;
    font-weight: bold;
    text-shadow: 1px 1px 2px #123c12;
  }

  .quick {
    display: flex;
    align-items: center;
    gap: 7px;
    width: 202px;
    padding-left: 12px;
  }

  .tasks {
    display: flex;
    flex: 1;
    gap: 2px;
    padding: 4px 0 3px;
  }

  .tasks button {
    justify-content: flex-start;
    gap: 4px;
    width: 158px;
    padding-left: 9px;
    border-radius: 2px;
    background: linear-gradient(#5a9bfb, #3c81f3 4px, #3a7cf0 19px, #2f6ae0);
  }

  .tasks .active {
    background: #1e50b8;
    box-shadow: inset 1px 1px 2px #123888;
  }

  .tray {
    display: flex;
    align-items: center;
    gap: 2px;
    width: 164px;
    background: linear-gradient(#2ea8f5, #149af0 4px, #0f8de8 24px, #0d72c4);
    border-left: 1px solid #0b4ea8;
  }

  .chev {
    margin: 0 0 0 -10px;
  }

  time {
    margin-left: 7px;
    white-space: nowrap;
  }
</style>
